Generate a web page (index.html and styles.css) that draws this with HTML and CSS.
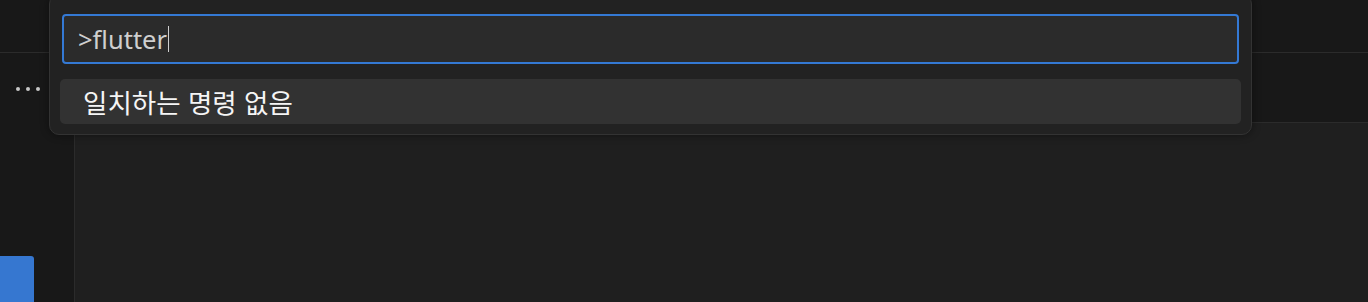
FILE: index.html
```html
<!DOCTYPE html>
<html lang="ko">
<head>
<meta charset="utf-8">
<title>Command Palette</title>
<link rel="stylesheet" href="styles.css">
</head>
<body>
<div class="app">
  <div class="titlebar"></div>
  <div class="main">
    <aside class="sidebar">
      <div class="sidebar-header">
        <span class="dots"><i></i><i></i><i></i></span>
      </div>
      <div class="sidebar-button"></div>
    </aside>
    <section class="editor">
      <div class="tabs"></div>
      <div class="content"></div>
    </section>
  </div>
  <div class="quick-input">
    <div class="input-box">
      <span class="input-text">&gt;flutter</span><span class="caret"></span>
    </div>
    <div class="list-row">일치하는 명령 없음</div>
  </div>
</div>
</body>
</html>
```

FILE: styles.css
```css
* { box-sizing: border-box; margin: 0; padding: 0; }
html, body { width: 1368px; height: 302px; overflow: hidden; background: #181818; }
body { font-family: "Noto Sans", "Noto Sans CJK KR", sans-serif; }

.app { position: relative; width: 1368px; height: 302px; display: flex; flex-direction: column; }

.titlebar { height: 53px; flex: none; background: #181818; border-bottom: 1px solid #2b2b2b; }

.main { flex: 1; display: flex; min-height: 0; }

.sidebar { width: 75px; flex: none; background: #181818; border-right: 1px solid #2b2b2b; display: flex; flex-direction: column; overflow: hidden; }
.sidebar-header { height: 70px; flex: none; display: flex; align-items: center; padding-left: 16px; }
.dots { display: flex; gap: 6px; margin-top: 1px; }
.dots i { display: block; width: 4px; height: 4px; border-radius: 50%; background: #c8c8c8; }
.sidebar-button { margin-top: 133px; width: 34px; height: 50px; background: #3677d0; border-top-right-radius: 3px; flex: none; }

.editor { flex: 1; display: flex; flex-direction: column; }
.tabs { height: 70px; flex: none; background: #181818; border-bottom: 1px solid #2b2b2b; }
.content { flex: 1; background: #1f1f1f; }

.quick-input {
  position: absolute; left: 49px; top: -6px; width: 1203px; height: 141px;
  background: #222222; border: 1px solid #333333; border-radius: 10px;
  box-shadow: 0 0 8px rgba(0,0,0,0.45);
  padding: 19px 10px 9px;
  display: flex; flex-direction: column; gap: 15px;
}
.input-box {
  margin: 0 2px; height: 50px; border: 2px solid #3479d4; border-radius: 4px;
  background: #2b2b2b; display: flex; align-items: center; padding-left: 14px;
}
.input-text { font-size: 25.5px; color: #cfcfcf; line-height: 1; margin-top: 1px; }
.caret { width: 1px; height: 26px; background: #cfcfcf; margin-left: 1px; }
.list-row {
  height: 45px; border-radius: 5px; background: #323232;
  display: flex; align-items: center; padding: 2px 0 0 23px;
  font-family: "Noto Sans CJK KR", sans-serif; font-size: 26.5px; color: #f5f5f5; line-height: 1;
}
```
